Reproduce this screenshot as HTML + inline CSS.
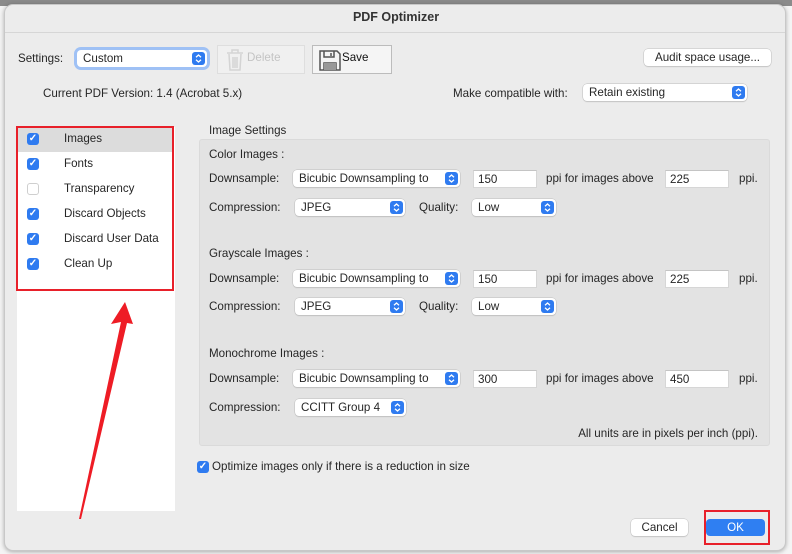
<!DOCTYPE html>
<html><head><meta charset="utf-8"><style>
*{box-sizing:border-box;margin:0;padding:0}
body{width:792px;height:554px;overflow:hidden;background:#f4f4f4;font-family:"Liberation Sans",sans-serif;font-size:11.6px;color:#262626;position:relative}
.a{position:absolute;white-space:nowrap}
.dlg{position:absolute;left:4px;top:4px;width:782px;height:547px;background:#ececec;border-radius:9px;border:1px solid #c8c8c8;box-shadow:0 1px 4px rgba(0,0,0,.3)}
.pop{position:absolute;background:#fff;border-radius:4px;box-shadow:0 0 0 .5px #bdbdbd,0 1px 1px rgba(0,0,0,.15);padding:0 6px;line-height:17px;height:17px;white-space:nowrap}
.st{position:absolute;right:2px;top:2px;width:13px;height:13px;border-radius:3px;background:#2f7bf0;overflow:hidden}
.inp{position:absolute;background:#fff;border:1px solid #d6d6d6;border-top-color:#c4c4c4;height:18px;line-height:18px;padding-left:4px}
.cb{position:absolute;width:12px;height:12px;border-radius:3px;background:#2f7bf0;color:#fff;font-size:10px;line-height:12px;text-align:center;font-weight:bold}
.cb.off{background:#fff;border:1px solid #cfcfcf}
.btn{position:absolute;background:#fff;border-radius:4px;box-shadow:0 0 0 .5px #c0c0c0,0 1px 1px rgba(0,0,0,.15);text-align:center;height:17px;line-height:17px}
</style></head><body>
<svg width="0" height="0" style="position:absolute"><defs><symbol id="ch" viewBox="0 0 13 13"><path d="M4 5.2l2.5-2.2 2.5 2.2M4 7.8l2.5 2.2 2.5-2.2" fill="none" stroke="#fff" stroke-width="1.3"/></symbol></defs></svg>
<div class="a" style="left:0;top:0;width:792px;height:6px;background:#8b8b8b"></div>
<div class="dlg"></div>
<div class="a" style="left:0;top:10px;width:792px;text-align:center;font-weight:bold;font-size:12.5px;color:#333">PDF Optimizer</div>
<div class="a" style="left:5px;top:32px;width:780px;height:1px;background:#d6d6d6"></div>

<div class="a" style="left:18px;top:52px">Settings:</div>
<div class="pop" style="left:77px;top:50px;width:130px;box-shadow:0 0 0 3px #9fc1f5,0 0 0 .5px #999">Custom<svg class="st"><use href="#ch"/></svg></div>
<div class="a" style="left:217px;top:45px;width:88px;height:29px;border:1px solid #dedede;background:#f0f0f0"></div>
<svg class="a" style="left:226px;top:49px" width="18" height="22"><g fill="none" stroke="#d4d4d4" stroke-width="1.5"><path d="M1 4h16M6 4V1h6v3M3 5l1 16h10l1-16M7 8v11M9 8v11M11 8v11"/></g></svg>
<div class="a" style="left:247px;top:51px;color:#c4c4c4">Delete</div>
<div class="a" style="left:312px;top:45px;width:80px;height:29px;border:1px solid #bcbcbc;background:#f5f5f5"></div>
<svg class="a" style="left:319px;top:50px" width="22" height="21"><g fill="none" stroke="#555" stroke-width="1.5"><path d="M1 1h17l3 3v16H1z"/><path d="M5 1v6h10V1M12 3v3M5 20v-7h12v7"/></g><rect x="5" y="13" width="12" height="7" fill="#999"/></svg>
<div class="a" style="left:342px;top:51px;color:#111">Save</div>
<div class="btn" style="left:644px;top:49px;width:127px">Audit space usage...</div>

<div class="a" style="left:43px;top:87px">Current PDF Version: 1.4 (Acrobat 5.x)</div>
<div class="a" style="left:453px;top:87px">Make compatible with:</div>
<div class="pop" style="left:583px;top:84px;width:164px">Retain existing<svg class="st"><use href="#ch"/></svg></div>

<div class="a" style="left:17px;top:127px;width:158px;height:384px;background:#fff"></div>
<div class="a" style="left:17px;top:127px;width:156px;height:25px;background:#dcdcdc"></div>
<div class="cb" style="left:27px;top:133px">✓</div><div class="a" style="left:64px;top:132px">Images</div>
<div class="cb" style="left:27px;top:158px">✓</div><div class="a" style="left:64px;top:157px">Fonts</div>
<div class="cb off" style="left:27px;top:183px"></div><div class="a" style="left:64px;top:182px">Transparency</div>
<div class="cb" style="left:27px;top:208px">✓</div><div class="a" style="left:64px;top:207px">Discard Objects</div>
<div class="cb" style="left:27px;top:233px">✓</div><div class="a" style="left:64px;top:232px">Discard User Data</div>
<div class="cb" style="left:27px;top:258px">✓</div><div class="a" style="left:64px;top:257px">Clean Up</div>
<div class="a" style="left:16px;top:126px;width:158px;height:165px;border:2px solid #e8202a"></div>

<div class="a" style="left:209px;top:124px">Image Settings</div>
<div class="a" style="left:199px;top:139px;width:571px;height:307px;background:#e3e3e3;border-radius:3px;border:1px solid #dadada"></div>

<div class="a" style="left:209px;top:148px">Color Images :</div>
<div class="a" style="left:209px;top:172px">Downsample:</div>
<div class="pop" style="left:293px;top:170px;width:167px">Bicubic Downsampling to<svg class="st"><use href="#ch"/></svg></div>
<div class="inp" style="left:473px;top:170px;width:64px">150</div>
<div class="a" style="left:546px;top:172px">ppi for images above</div>
<div class="inp" style="left:665px;top:170px;width:64px">225</div>
<div class="a" style="left:739px;top:172px">ppi.</div>
<div class="a" style="left:209px;top:201px">Compression:</div>
<div class="pop" style="left:295px;top:199px;width:110px">JPEG<svg class="st"><use href="#ch"/></svg></div>
<div class="a" style="left:419px;top:201px">Quality:</div>
<div class="pop" style="left:472px;top:199px;width:84px">Low<svg class="st"><use href="#ch"/></svg></div>

<div class="a" style="left:209px;top:247px">Grayscale Images :</div>
<div class="a" style="left:209px;top:272px">Downsample:</div>
<div class="pop" style="left:293px;top:270px;width:167px">Bicubic Downsampling to<svg class="st"><use href="#ch"/></svg></div>
<div class="inp" style="left:473px;top:270px;width:64px">150</div>
<div class="a" style="left:546px;top:272px">ppi for images above</div>
<div class="inp" style="left:665px;top:270px;width:64px">225</div>
<div class="a" style="left:739px;top:272px">ppi.</div>
<div class="a" style="left:209px;top:300px">Compression:</div>
<div class="pop" style="left:295px;top:298px;width:110px">JPEG<svg class="st"><use href="#ch"/></svg></div>
<div class="a" style="left:419px;top:300px">Quality:</div>
<div class="pop" style="left:472px;top:298px;width:84px">Low<svg class="st"><use href="#ch"/></svg></div>

<div class="a" style="left:209px;top:347px">Monochrome Images :</div>
<div class="a" style="left:209px;top:372px">Downsample:</div>
<div class="pop" style="left:293px;top:370px;width:167px">Bicubic Downsampling to<svg class="st"><use href="#ch"/></svg></div>
<div class="inp" style="left:473px;top:370px;width:64px">300</div>
<div class="a" style="left:546px;top:372px">ppi for images above</div>
<div class="inp" style="left:665px;top:370px;width:64px">450</div>
<div class="a" style="left:739px;top:372px">ppi.</div>
<div class="a" style="left:209px;top:401px">Compression:</div>
<div class="pop" style="left:295px;top:399px;width:111px">CCITT Group 4<svg class="st"><use href="#ch"/></svg></div>
<div class="a" style="right:34px;top:427px">All units are in pixels per inch (ppi).</div>

<div class="cb" style="left:197px;top:461px">✓</div>
<div class="a" style="left:212px;top:460px">Optimize images only if there is a reduction in size</div>

<div class="btn" style="left:631px;top:519px;width:57px">Cancel</div>
<div class="btn" style="left:706px;top:519px;width:59px;background:#2f7ff2;color:#fff;box-shadow:none">OK</div>
<div class="a" style="left:704px;top:510px;width:66px;height:35px;border:2px solid #e8202a"></div>

<svg class="a" style="left:0;top:0" width="792" height="554"><polygon points="125,302 133,324 127,323 81,519 79,519 121,322 111,324" fill="#ee1c25"/></svg>
</body></html>
